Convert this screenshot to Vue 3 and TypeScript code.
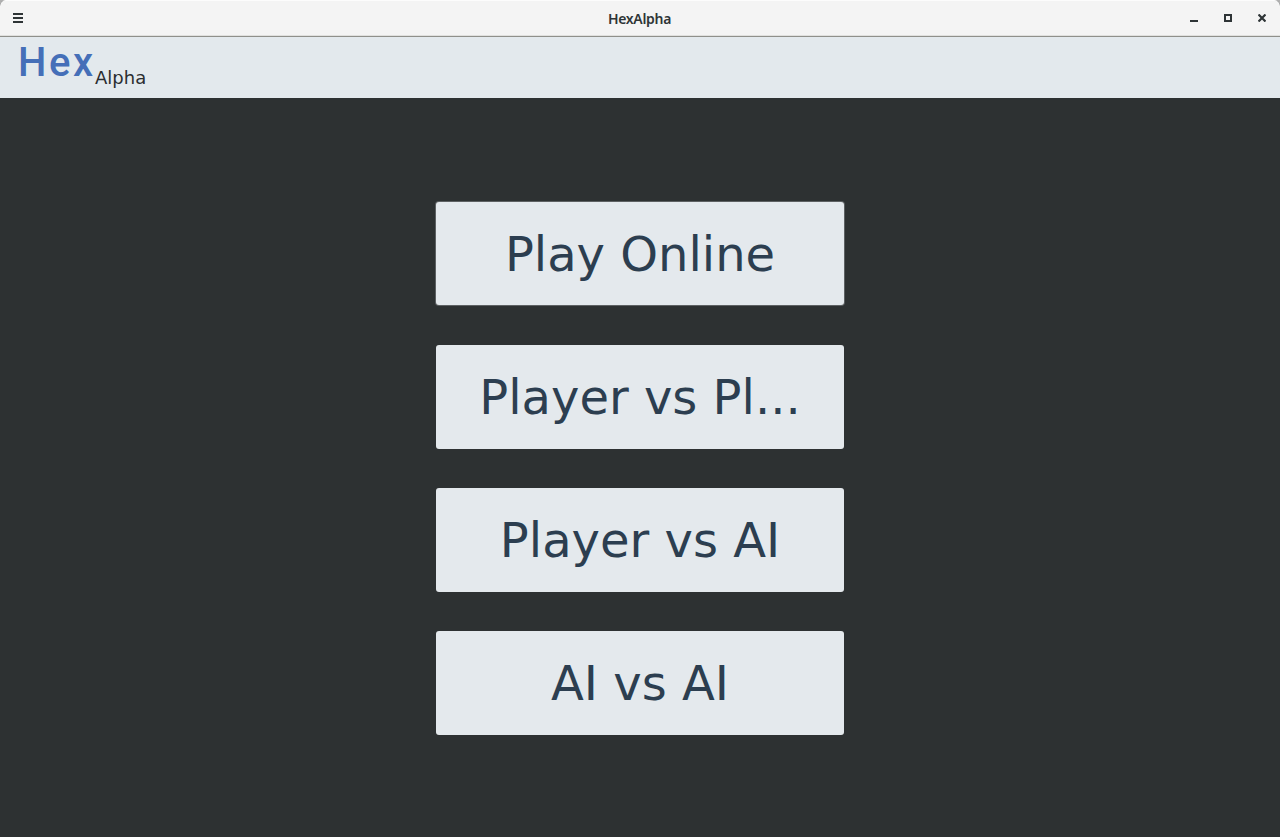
<script setup lang="ts">
const modes: string[] = ['Play Online', 'Player vs Pl...', 'Player vs AI', 'AI vs AI']
</script>

<template>
  <div class="window">
    <header class="titlebar">
      <svg class="icon" width="10" height="10" viewBox="0 0 10 10"><path d="M0 0h10v2H0zM0 4h10v2H0zM0 8h10v2H0z" /></svg>
      <h1 class="title">HexAlpha</h1>
      <div class="controls">
        <svg class="icon" width="8" height="8" viewBox="0 0 8 8"><path d="M0 6h8v2H0z" /></svg>
        <svg class="icon" width="8" height="8" viewBox="0 0 8 8"><path fill-rule="evenodd" d="M0 0h8v8H0zM2 2v4h4V2z" /></svg>
        <svg class="icon" width="8" height="8" viewBox="0 0 8 8"><path d="M.5.5l7 7M7.500.5l-7 7" stroke="#2e3436" stroke-width="2.2" /></svg>
      </div>
    </header>
    <div class="brandbar"><span class="hex">Hex</span><span class="alpha">Alpha</span></div>
    <main class="menu">
      <button v-for="(m, i) in modes" :key="m" class="mode" :class="{ active: i === 0 }">{{ m }}</button>
    </main>
  </div>
</template>

<style>
body { margin: 0; background: #b0b0b0; }
</style>
<style scoped>
.window { height: 837px; display: flex; flex-direction: column; background: #2d3132; overflow: hidden; border-radius: 6px 6px 0 0; }
.titlebar { height: 37px; box-sizing: border-box; flex: none; display: grid; grid-template-columns: 1fr auto 1fr; align-items: center; padding: 0 14px 1px 13px; background: #f4f4f4; border-bottom: 1px solid #8f908b; box-shadow: inset 0 1px #fcfcfc, inset 0 -1px #e0e0de; }
.icon { display: block; fill: #2e3436; }
.title { margin: 0; padding-top: 2px; font: 600 14px/20px "Noto Sans", sans-serif; letter-spacing: -.3px; color: #2e3436; }
.controls { display: flex; gap: 26px; justify-content: flex-end; }
.brandbar { height: 61px; flex: none; background: #e3e9ed; display: flex; padding-left: 18px; box-sizing: border-box; white-space: nowrap; }
.hex { width: 77px; font: 500 40px/51px Roboto, sans-serif; letter-spacing: 2.6px; color: #456fb8; }
.alpha { font: 18px/81px "DejaVu Sans", sans-serif; color: #2b2e30; }
.menu { flex: 1; display: flex; flex-direction: column; align-items: center; gap: 39px; padding-top: 104px; }
.mode { width: 408px; height: 104px; flex: none; border: 0; border-radius: 3px; padding: 0; background: #e4e9ed; color: #2c3e50; font: 48px/104px "DejaVu Sans", sans-serif; }
.active { height: 103px; margin-bottom: 1px; box-shadow: 0 0 0 1px #5d6163; }
</style>
